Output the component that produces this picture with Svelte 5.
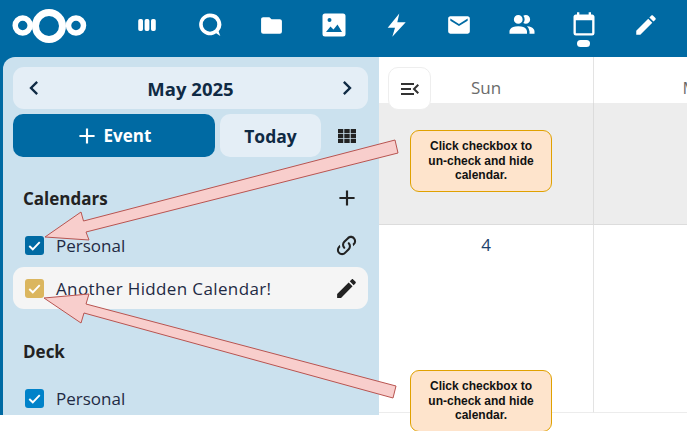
<script>
  const navIcons = [
    { name: 'apps', size: 26, d: 'M5.500 6.500h1.200a1.600 1.600 0 0 1 1.600 1.600v7.800a1.600 1.600 0 0 1-1.600 1.600H5.500a1.600 1.600 0 0 1-1.600-1.600V8.100a1.600 1.600 0 0 1 1.600-1.600ZM11.400 6.500h1.200a1.600 1.600 0 0 1 1.600 1.600v7.800a1.600 1.600 0 0 1-1.600 1.600h-1.200a1.600 1.600 0 0 1-1.600-1.600V8.100a1.600 1.600 0 0 1 1.600-1.600ZM17.300 6.500h1.200a1.600 1.600 0 0 1 1.600 1.600v7.800a1.600 1.600 0 0 1-1.600 1.600h-1.200a1.600 1.600 0 0 1-1.600-1.600V8.100a1.600 1.600 0 0 1 1.600-1.600Z' },
    { name: 'talk', size: 26, d: 'M12 1.500a10 10 0 1 0 5.700 18.200l3.800 2.500-1.500-4.200A10 10 0 0 0 12 1.500Zm0 3.300a6.700 6.700 0 1 1 0 13.400 6.700 6.700 0 0 1 0-13.400Z' },
    { name: 'files', size: 25, d: 'M10 4H4C2.890 4 2 4.890 2 6V18A2 2 0 0 0 4 20H20A2 2 0 0 0 22 18V8C22 6.890 21.100 6 20 6H12L10 4Z' },
    { name: 'photos', size: 24, d: 'M3 0.500H21A2.500 2.500 0 0 1 23.500 3V21A2.500 2.500 0 0 1 21 23.500H3A2.500 2.500 0 0 1 0.500 21V3A2.500 2.500 0 0 1 3 0.500ZM7.500 5A2 2 0 1 0 7.500 9 2 2 0 0 0 7.500 5ZM4 19H20L15.500 11.500 11.500 16.500 8.500 13.500Z' },
    { name: 'activity', size: 24, d: 'M14.300 0.500L2.700 14.800H10L7.300 23.800L20.700 9.200H12.300Z' },
    { name: 'mail', size: 26, d: 'M20 8L12 13L4 8V6L12 11L20 6M20 4H4C2.890 4 2 4.890 2 6V18A2 2 0 0 0 4 20H20A2 2 0 0 0 22 18V6C22 4.890 21.100 4 20 4Z' },
    { name: 'contacts', size: 30, d: 'M16 17V19H2V17S2 13 9 13 16 17 16 17M12.500 7.500A3.500 3.500 0 1 0 9 11A3.500 3.500 0 0 0 12.500 7.500M15.940 13A5.320 5.320 0 0 1 18 17V19H22V17S22 13.370 15.940 13M15 4A3.390 3.390 0 0 0 13.070 4.590A5 5 0 0 1 13.070 10.410A3.390 3.390 0 0 0 15 11A3.500 3.500 0 0 0 15 4Z' },
    { name: 'calendar', size: 28, active: true, d: 'M19 19H5V8H19M16 1V3H8V1H6V3H5C3.890 3 3 3.890 3 5V19A2 2 0 0 0 5 21H19A2 2 0 0 0 21 19V5C21 3.890 20.100 3 19 3H18V1' },
    { name: 'notes', size: 26, d: 'M20.710 7.040C21.100 6.650 21.100 6 20.710 5.630L18.370 3.290C18 2.900 17.350 2.900 16.960 3.290L15.120 5.120L18.870 8.870M3 17.250V21H6.750L17.810 9.930L14.060 6.180L3 17.250Z' }
  ];
  const plus = 'M19 13H13V19H11V13H5V11H11V5H13V11H19V13Z';
  const pencil = 'M20.710 7.040C21.100 6.650 21.100 6 20.710 5.630L18.370 3.290C18 2.900 17.350 2.900 16.960 3.290L15.120 5.120L18.870 8.870M3 17.250V21H6.750L17.810 9.930L14.060 6.180L3 17.250Z';
  const link = 'M10.590 13.410C11 13.800 11 14.440 10.590 14.830C10.200 15.220 9.560 15.220 9.170 14.830C7.220 12.880 7.220 9.710 9.170 7.760L12.710 4.220C14.660 2.270 17.830 2.270 19.780 4.220C21.730 6.170 21.730 9.340 19.780 11.290L18.290 12.780C18.300 11.960 18.170 11.140 17.890 10.360L18.360 9.880C19.540 8.710 19.540 6.810 18.360 5.640C17.190 4.460 15.290 4.460 14.120 5.640L10.590 9.170C9.410 10.340 9.410 12.240 10.590 13.410M13.410 9.170C13.800 8.780 14.440 8.780 14.830 9.170C16.780 11.120 16.780 14.290 14.830 16.240L11.290 19.780C9.340 21.730 6.170 21.730 4.220 19.780C2.270 17.830 2.270 14.660 4.220 12.710L5.710 11.220C5.700 12.040 5.830 12.860 6.110 13.650L5.640 14.120C4.460 15.290 4.460 17.190 5.640 18.360C6.810 19.540 8.710 19.540 9.880 18.360L13.410 14.830C14.590 13.660 14.590 11.760 13.410 10.590C13 10.200 13 9.560 13.410 9.170Z';
</script>

<div class="app">
  <header class="topbar">
    <svg class="logo" width="76" height="36" viewBox="0 0 76 36" aria-label="Nextcloud">
      <circle cx="10.700" cy="17.500" r="7.500" />
      <circle cx="37" cy="18" r="13.500" class="mid" />
      <circle cx="64" cy="17.500" r="7.500" />
    </svg>
    <nav class="nav">
      {#each navIcons as icon}
        <div class="nav-item">
          <svg class="nav-icon" style="width:{icon.size}px;height:{icon.size}px" viewBox="0 0 24 24" aria-label={icon.name}><path d={icon.d} fill-rule="evenodd" /></svg>
          {#if icon.active}<span class="pill"></span>{/if}
        </div>
      {/each}
    </nav>
  </header>

  <div class="body">
    <aside class="sidebar">
      <div class="month">
        <svg class="ico" viewBox="0 0 24 24"><path d="M15.410 16.580L10.830 12L15.410 7.410L14 6L8 12L14 18L15.410 16.580Z" /></svg>
        <strong>May 2025</strong>
        <svg class="ico" viewBox="0 0 24 24"><path d="M8.590 16.580L13.170 12L8.590 7.410L10 6L16 12L10 18L8.590 16.580Z" /></svg>
      </div>
      <div class="actions">
        <button class="event"><svg viewBox="0 0 24 24"><path d={plus} /></svg>Event</button>
        <button class="today">Today</button>
        <svg class="grid-ico" viewBox="0 0 18 14">
          <path d="M0 0h5.300v4.200H0zM6.300 0h5.400v4.200H6.300zM12.700 0H18v4.200h-5.300zM0 4.900h5.300v4.200H0zM6.300 4.900h5.400v4.200H6.300zM12.700 4.900H18v4.200h-5.300zM0 9.800h5.300V14H0zM6.300 9.800h5.400V14H6.300zM12.700 9.800H18V14h-5.300z" />
        </svg>
      </div>

      <section class="group calendars">
        <div class="group-head">
          <h2>Calendars</h2>
          <svg class="ico" viewBox="0 0 24 24"><path d={plus} /></svg>
        </div>
        <div class="cal">
          <span class="check blue"><svg viewBox="0 0 20 20"><path d="M4.500 10.500l3.700 3.500 7.300-7.500" /></svg></span>
          <span class="label">Personal</span>
          <svg class="ico" viewBox="0 0 24 24"><path d={link} /></svg>
        </div>
        <div class="cal hover">
          <span class="check gold"><svg viewBox="0 0 20 20"><path d="M4.500 10.500l3.700 3.500 7.300-7.500" /></svg></span>
          <span class="label long">Another Hidden Calendar!</span>
          <svg class="ico" viewBox="0 0 24 24"><path d={pencil} /></svg>
        </div>
      </section>

      <section class="group deck">
        <div class="group-head"><h2>Deck</h2></div>
        <div class="cal">
          <span class="check sky"><svg viewBox="0 0 20 20"><path d="M4.500 10.500l3.700 3.500 7.300-7.500" /></svg></span>
          <span class="label">Personal</span>
        </div>
      </section>
    </aside>

    <main class="main">
      <button class="toggle" aria-label="Toggle navigation">
        <svg viewBox="0 0 24 24"><path d="M21 15.610L19.590 17L14.580 12L19.590 7L21 8.390L17.440 12L21 15.610M3 6H16V8H3V6M3 13V11H13V13H3M3 18V16H16V18H3Z" /></svg>
      </button>
      <div class="cell head">Sun</div>
      <div class="cell head">Mon</div>
      <div class="cell allday"></div>
      <div class="cell allday"></div>
      <div class="cell day">4</div>
      <div class="cell day"></div>
    </main>
  </div>

  <svg class="arrows" viewBox="0 0 687 431" width="687" height="431" aria-hidden="true">
    <path d="M45 237L81 212L83.500 221L395 140L398 153L86 232L89 240Z" />
    <path d="M44 298L89 294L86 304L396 386L393 398L84 313L81 323Z" />
  </svg>
  <div class="note one">Click checkbox to un-check and hide calendar.</div>
  <div class="note two">Click checkbox to un-check and hide calendar.</div>
</div>

<style>
  :global(body) {
    margin: 0;
    background: #fff;
  }

  .app {
    position: relative;
    width: 687px;
    height: 431px;
    overflow: hidden;
    font-family: "Open Sans", "Noto Sans", sans-serif;
    color: #222;
  }

  .topbar {
    display: flex;
    height: 57px;
    background: #006aa3;
    padding-left: 12px;
    box-sizing: border-box;
  }

  .logo {
    flex: none;
    margin-top: 8px;
    fill: none;
    stroke: #fff;
    stroke-width: 5.500;
  }

  .logo .mid {
    stroke-width: 7;
  }

  .nav {
    display: flex;
    margin-left: 28px;
  }

  .nav-item {
    position: relative;
    flex: none;
    width: 62.400px;
    height: 50px;
    display: flex;
    align-items: center;
    justify-content: center;
  }

  .nav-icon {
    fill: #fff;
  }

  .pill {
    position: absolute;
    left: 24.500px;
    top: 40px;
    width: 13px;
    height: 7px;
    border-radius: 4px;
    background: #fff;
  }

  .body {
    display: flex;
    height: 358px;
    padding-left: 3px;
    background: linear-gradient(#006aa3, #006aa3) left / 3px 100% no-repeat, linear-gradient(#006aa3, #006aa3) left top / 20px 20px no-repeat;
  }

  .sidebar {
    flex: none;
    width: 376px;
    box-sizing: border-box;
    padding: 10px 11px 0 10px;
    background: #cbe1ee;
    border-top-left-radius: 12px;
    overflow: hidden;
  }

  .ico {
    flex: none;
    width: 25px;
    height: 25px;
    fill: #222;
  }

  .month {
    display: flex;
    align-items: center;
    justify-content: space-between;
    height: 42px;
    padding: 0 7px;
    box-sizing: border-box;
    border-radius: 11px;
    background: #e4eef6;
    color: #0f2a44;
  }

  .month .ico {
    width: 28px;
    height: 28px;
    fill: #0f2a44;
  }

  .month strong {
    font-size: 18.500px;
    font-weight: 700;
  }

  .actions {
    display: flex;
    align-items: center;
    gap: 5px;
    height: 43px;
    margin-top: 5px;
  }

  button {
    border: 0;
    padding: 0;
    font: inherit;
  }

  .event {
    display: flex;
    align-items: center;
    justify-content: center;
    gap: 4px;
    width: 202px;
    height: 43px;
    border-radius: 10px;
    background: #006aa3;
    color: #fff;
    font-size: 17px;
    font-weight: 700;
  }

  .event svg {
    width: 26px;
    height: 26px;
    margin-left: -3px;
    fill: #fff;
  }

  .today {
    width: 101px;
    height: 43px;
    border-radius: 10px;
    background: #e4eef6;
    color: #0f2a44;
    font-size: 17.500px;
    font-weight: 700;
  }

  .grid-ico {
    width: 18px;
    height: 14px;
    margin-left: 12px;
    fill: #222;
  }

  .group-head {
    display: flex;
    align-items: center;
    justify-content: space-between;
    height: 44px;
    margin-bottom: 4px;
    padding: 0 9px 0 10px;
  }

  .group-head .ico {
    width: 26px;
    height: 26px;
    margin-right: -1px;
  }

  .group-head h2 {
    margin: 0;
    font-size: 17px;
    font-weight: 700;
    color: #222;
  }

  .calendars {
    margin-top: 19px;
  }

  .deck {
    margin-top: 20px;
  }

  .cal {
    display: flex;
    align-items: center;
    height: 42px;
    padding: 0 9px 0 12px;
    border-radius: 11px;
    color: #1f2a44;
    font-size: 17px;
  }

  .cal + .cal {
    margin-top: 1px;
  }

  .cal.hover {
    background: #f5f5f5;
  }

  .cal .label {
    flex: 1;
    margin-left: 12px;
  }

  .cal .long {
    letter-spacing: 0.370px;
  }

  .check {
    flex: none;
    width: 19px;
    height: 19px;
    border-radius: 3px;
  }

  .check svg {
    display: block;
    width: 19px;
    height: 19px;
    fill: none;
    stroke: #fff;
    stroke-width: 2;
  }

  .blue { background: #006aa3; }
  .gold { background: #dbb65f; }
  .sky { background: #0082c9; }

  .main {
    position: relative;
    flex: 1;
    display: grid;
    grid-template-columns: 215px 214px;
    grid-template-rows: 46px 122px 188px;
    overflow: hidden;
    background: #fff;
  }

  .toggle {
    position: absolute;
    left: 9px;
    top: 10px;
    width: 43px;
    height: 43px;
    display: flex;
    align-items: center;
    justify-content: center;
    border: 1px solid #eee;
    border-radius: 10px;
    background: #fff;
  }

  .toggle svg {
    width: 24px;
    height: 24px;
    fill: #333;
  }

  .cell {
    box-sizing: border-box;
    border-right: 1px solid #e3e3e3;
    text-align: center;
  }

  .head {
    padding-top: 19px;
    font-size: 17px;
    line-height: 24px;
    color: #6b6b6b;
  }

  .allday {
    background: #ededed;
    border-bottom: 1px solid #dcdcdc;
    border-right-color: #dcdcdc;
  }

  .day {
    padding-top: 8px;
    font-size: 17px;
    line-height: 24px;
    color: #1d3f6b;
    border-bottom: 1px solid #ececec;
  }

  .arrows {
    position: absolute;
    inset: 0;
    pointer-events: none;
    fill: #f8cecc;
    stroke: #b85450;
    stroke-width: 1;
  }

  .note {
    position: absolute;
    left: 410px;
    width: 142px;
    height: 62px;
    box-sizing: border-box;
    padding: 0 14px;
    display: flex;
    align-items: center;
    justify-content: center;
    text-align: center;
    border: 1px solid #e0a100;
    border-radius: 9px;
    background: #fee4cc;
    color: #111;
    font: 700 12px/14.500px "Liberation Sans", Arial, sans-serif;
  }

  .one { top: 130px; }
  .two { top: 370px; }
</style>
